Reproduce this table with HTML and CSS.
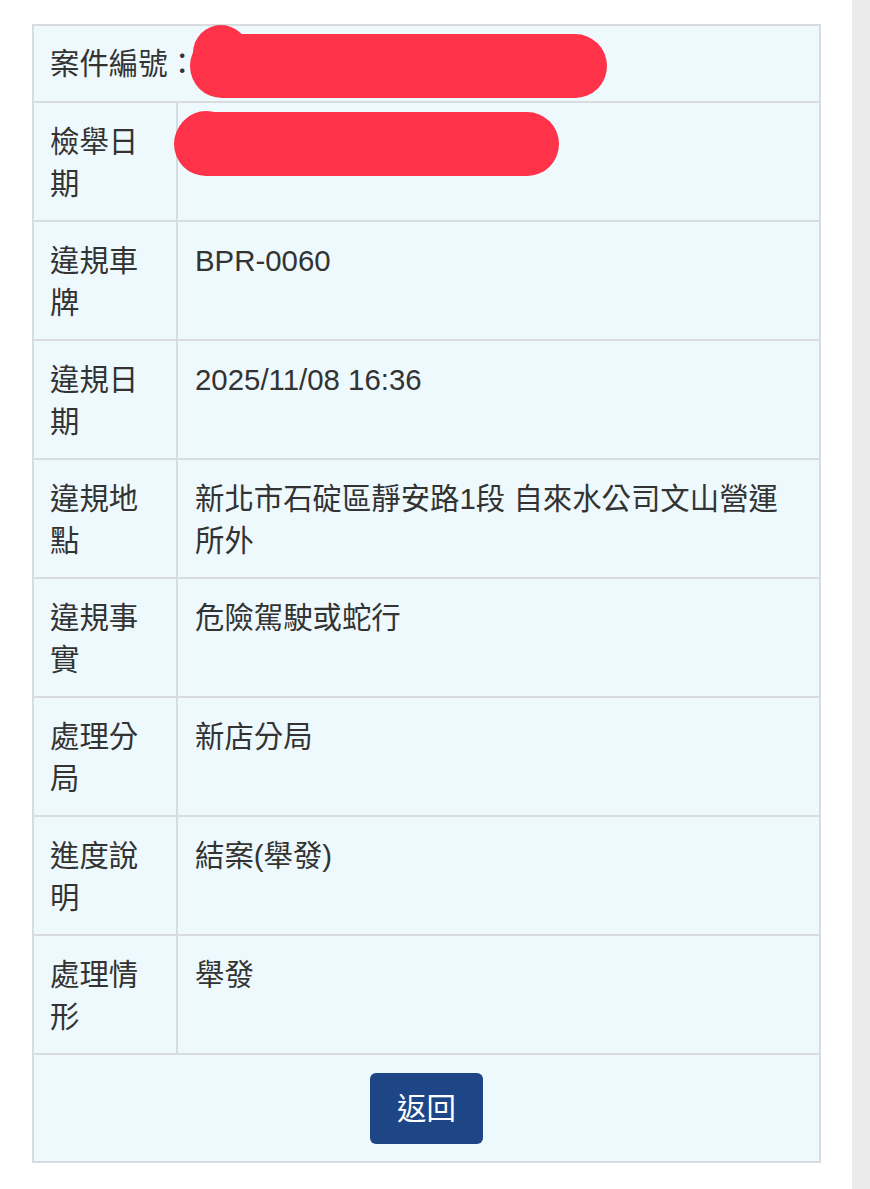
FILE: index.html
```html
<!DOCTYPE html>
<html lang="zh-Hant">
<head>
<meta charset="utf-8">
<title>案件查詢結果</title>
<link rel="stylesheet" href="styles.css">
</head>
<body>
<div class="page">
  <main class="main">
    <div class="case-wrap">
      <div class="case-grid">
        <div class="cell head">案件編號：</div>
        <div class="cell label">檢舉日期</div><div class="cell value"></div>
        <div class="cell label">違規車牌</div><div class="cell value">BPR-0060</div>
        <div class="cell label">違規日期</div><div class="cell value">2025/11/08 16:36</div>
        <div class="cell label">違規地點</div><div class="cell value">新北市石碇區靜安路1段 自來水公司文山營運所外</div>
        <div class="cell label">違規事實</div><div class="cell value">危險駕駛或蛇行</div>
        <div class="cell label">處理分局</div><div class="cell value">新店分局</div>
        <div class="cell label">進度說明</div><div class="cell value">結案(舉發)</div>
        <div class="cell label">處理情形</div><div class="cell value">舉發</div>
        <div class="cell actions"><button class="btn-back" type="button">返回</button></div>
      </div>
      <svg class="redact" width="789" height="200" viewBox="0 0 789 200" aria-hidden="true">
        <circle cx="189" cy="29" r="28" fill="#fe3249"/>
        <line x1="190" y1="42" x2="543" y2="42" stroke="#fe3249" stroke-width="64" stroke-linecap="round"/>
        <circle cx="174" cy="117" r="30" fill="#fe3249"/>
        <line x1="174" y1="120" x2="495" y2="120" stroke="#fe3249" stroke-width="64" stroke-linecap="round"/>
      </svg>
    </div>
  </main>
  <div class="scrollbar"></div>
</div>
</body>
</html>
```

FILE: styles.css
```css
html, body {
  margin: 0;
  padding: 0;
  background: #ffffff;
}

.page {
  display: flex;
  min-height: 100vh;
  font-family: "Liberation Sans", "Noto Sans CJK TC", sans-serif;
  color: #333333;
}

.main {
  flex: 1;
  padding: 24px 31px 0 32px;
}

.scrollbar {
  width: 18px;
  background: #ebebeb;
  min-height: 100vh;
}

.case-wrap {
  position: relative;
  width: 789px;
}

.case-grid {
  display: grid;
  grid-template-columns: 142px 1fr;
  gap: 2px;
  padding: 2px;
  background: #d8dcde;
}

.cell {
  background: #eef9fd;
  font-size: 29.4px;
  line-height: 42px;
}

.head {
  grid-column: 1 / 3;
  padding: 17px 16px 16px 16px;
}

.label {
  padding: 18px 16px 15px 16px;
  min-height: 84px;
}

.value {
  padding: 18px 17px 15px 17px;
}

.actions {
  grid-column: 1 / 3;
  padding: 18px 0 17px;
  display: flex;
  justify-content: center;
}

.btn-back {
  width: 113px;
  height: 71px;
  border: none;
  border-radius: 6px;
  background: #1e4586;
  color: #ffffff;
  font-family: "Liberation Sans", "Noto Sans CJK TC", sans-serif;
  font-size: 29.4px;
  line-height: 42px;
  padding: 0;
}

.redact {
  position: absolute;
  left: 0;
  top: 0;
  pointer-events: none;
}
```
